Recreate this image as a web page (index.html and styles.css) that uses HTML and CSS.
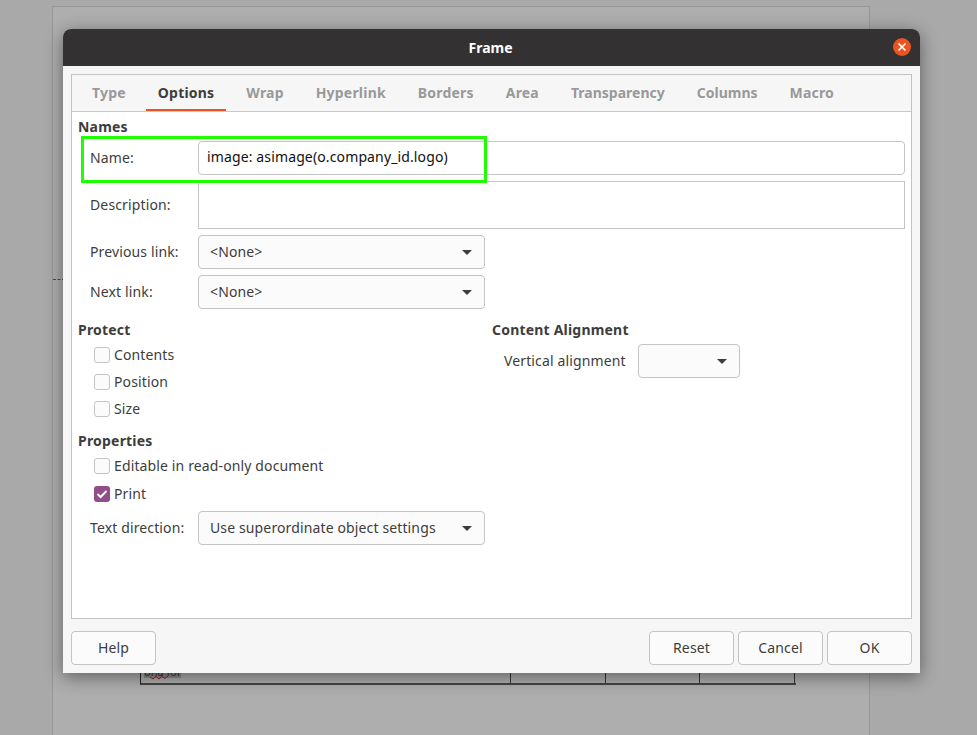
FILE: index.html
```html
<!DOCTYPE html>
<html lang="en">
<head>
  <meta charset="UTF-8">
  <title>Frame</title>
  <link rel="stylesheet" href="styles.css">
</head>
<body>
  <div class="page">
    <div class="margin-mark"></div>
    <div class="doc-table">
      <div class="doc-cell cell-main">
        <div class="doc-text">ona for
          <svg class="squiggle" width="18" height="5" viewBox="0 0 18 5"><path d="M0 2L3 4L6 1.5L9 4L12 1.5L15 3.5L18 1" stroke="#a01c1c" stroke-width="1" fill="none"/></svg>
        </div>
      </div>
      <div class="doc-cell cell-a"></div>
      <div class="doc-cell cell-b"></div>
      <div class="doc-cell cell-c"></div>
    </div>
  </div>

  <div class="dialog">
    <div class="titlebar">
      <span class="title">Frame</span>
      <span class="close-btn">
        <svg width="10" height="10" viewBox="0 0 10 10"><path d="M1.5 1.5L8.5 8.5M8.5 1.5L1.5 8.5" stroke="#fff" stroke-width="1.7" fill="none"/></svg>
      </span>
    </div>
    <div class="dialog-body">
      <div class="notebook">
        <div class="tabs">
          <span class="tab">Type</span>
          <span class="tab active">Options</span>
          <span class="tab">Wrap</span>
          <span class="tab">Hyperlink</span>
          <span class="tab">Borders</span>
          <span class="tab">Area</span>
          <span class="tab tab-tight">Transparency</span>
          <span class="tab tab-tight">Columns</span>
          <span class="tab">Macro</span>
        </div>
        <div class="panel">
          <h2 class="heading">Names</h2>
          <div class="names">
            <label class="label">Name:</label>
            <div class="entry">image: asimage(o.company_id.logo)</div>
            <label class="label">Description:</label>
            <div class="entry textarea"></div>
            <label class="label">Previous link:</label>
            <div class="combo combo-wide"><span>&lt;None&gt;</span><i class="arrow"></i></div>
            <label class="label">Next link:</label>
            <div class="combo combo-wide"><span>&lt;None&gt;</span><i class="arrow"></i></div>
          </div>

          <div class="columns">
            <div class="col-left">
              <h2 class="heading">Protect</h2>
              <div class="checks">
                <div class="check"><i class="box"></i><span>Contents</span></div>
                <div class="check"><i class="box"></i><span>Position</span></div>
                <div class="check"><i class="box"></i><span>Size</span></div>
              </div>
              <h2 class="heading heading-props">Properties</h2>
              <div class="checks checks-props">
                <div class="check"><i class="box"></i><span>Editable in read-only document</span></div>
                <div class="check">
                  <i class="box checked">
                    <svg width="16" height="16" viewBox="0 0 16 16"><path d="M3.5 8L6.6 11L12.5 5" stroke="#fff" stroke-width="2" fill="none"/></svg>
                  </i><span>Print</span>
                </div>
              </div>
              <div class="direction">
                <label class="label">Text direction:</label>
                <div class="combo combo-wide"><span>Use superordinate object settings</span><i class="arrow"></i></div>
              </div>
            </div>
            <div class="col-right">
              <h2 class="heading">Content Alignment</h2>
              <div class="valign">
                <label class="label">Vertical alignment</label>
                <div class="combo combo-small"><span></span><i class="arrow"></i></div>
              </div>
            </div>
          </div>
        </div>
      </div>
      <div class="buttons">
        <button class="btn">Help</button>
        <div class="btn-group">
          <button class="btn">Reset</button>
          <button class="btn">Cancel</button>
          <button class="btn">OK</button>
        </div>
      </div>
    </div>
    <div class="highlight"></div>
  </div>
</body>
</html>
```

FILE: styles.css
```css
* {
  box-sizing: border-box;
}
body {
  margin: 0;
  width: 977px;
  height: 735px;
  overflow: hidden;
  position: relative;
  background: #a9a9a9;
  font-family: "Noto Sans", "Open Sans", sans-serif;
  font-size: 14px;
  letter-spacing: 0.13px;
  color: #3d3d3d;
}

/* document behind the dialog */
.page {
  position: absolute;
  left: 52px;
  top: 6px;
  width: 818px;
  height: 740px;
  background: #aeaeae;
  border: 1px solid #979797;
}
.margin-mark {
  position: absolute;
  left: 0;
  top: 272px;
  width: 12px;
  border-top: 1px dashed #3f4f55;
}
.doc-table {
  position: absolute;
  left: 87px;
  top: 650px;
  width: 656px;
  height: 28px;
  display: flex;
  border-left: 1px solid #222;
  border-bottom: 2px solid #444;
}
.doc-cell {
  border-right: 1px solid #333;
  height: 100%;
}
.cell-main {
  width: 370px;
  padding: 8px 0 0 3px;
}
.cell-a {
  width: 95px;
}
.cell-b {
  width: 94px;
}
.cell-c {
  width: 95px;
}
.doc-text {
  position: relative;
  width: 37px;
  height: 13px;
  background: #8b8b8b;
  font-size: 11px;
  line-height: 13px;
  letter-spacing: 0;
  white-space: nowrap;
  color: #333;
}
.squiggle {
  position: absolute;
  left: 6px;
  top: 10px;
}

/* dialog window */
.dialog {
  position: absolute;
  left: 63px;
  top: 29px;
  width: 857px;
  height: 644px;
  border-radius: 8px 8px 0 0;
  box-shadow: 0 4px 18px rgba(0,0,0,0.45);
  background: #f6f6f6;
}
.titlebar {
  height: 37px;
  background: #333132;
  border-radius: 8px 8px 0 0;
  display: flex;
  justify-content: center;
  align-items: center;
  color: #fff;
  font-weight: bold;
}
.title {
  font-size: 14px;
  padding-right: 2px;
  letter-spacing: 0;
}
.close-btn {
  position: absolute;
  left: 830px;
  top: 9px;
  width: 18px;
  height: 18px;
  border-radius: 50%;
  background: #e95420;
  display: flex;
  justify-content: center;
  align-items: center;
}
.dialog-body {
  padding: 8px;
}
.notebook {
  height: 545px;
  border: 1px solid #c2c2c2;
  background: #fff;
}
.tabs {
  height: 37px;
  padding-left: 8px;
  display: flex;
  gap: 8px;
  background: #f6f6f6;
  border-bottom: 1px solid #c9c9c9;
}
.tab {
  padding: 0 12px;
  height: 36px;
  line-height: 35px;
  font-weight: bold;
  letter-spacing: 0.2px;
  color: #999;
}
.tab-tight {
  letter-spacing: 0;
}
.tab.active {
  color: #3d3d3d;
  border-bottom: 2px solid #e95420;
}
.panel {
  padding: 6px 6px 0 6px;
}
.heading {
  margin: 0;
  height: 18px;
  line-height: 18px;
  font-size: 14px;
  font-weight: bold;
  letter-spacing: 0.2px;
  color: #3d3d3d;
}

/* names block */
.names {
  margin-top: 5px;
  padding-left: 12px;
  display: grid;
  grid-template-columns: 108px 1fr;
  row-gap: 6px;
  align-items: center;
}
.label {
  padding-bottom: 2px;
  color: #3d3d3d;
}
.entry {
  height: 34px;
  line-height: 30px;
  padding: 0 8px;
  background: #fff;
  border: 1px solid #c4c4c4;
  border-radius: 4px;
  color: #111;
}
.entry.textarea {
  height: 48px;
  border-radius: 0;
}
.combo {
  height: 34px;
  display: flex;
  justify-content: space-between;
  align-items: center;
  padding: 0 12px 0 11px;
  background: #fbfbfb;
  border: 1px solid #c4c4c4;
  border-radius: 4px;
}
.combo span {
  margin-bottom: 2px;
}
.combo-wide {
  width: 287px;
}
.combo-small {
  width: 102px;
}
.arrow {
  width: 0;
  height: 0;
  border-left: 5px solid transparent;
  border-right: 5px solid transparent;
  border-top: 5px solid #3d3d3d;
}

/* lower columns */
.columns {
  margin-top: 12px;
  display: flex;
}
.col-left {
  width: 414px;
}
.checks {
  margin-top: 2px;
  padding-left: 16px;
}
.check {
  height: 27px;
  padding-top: 1px;
  display: flex;
  align-items: center;
  gap: 4px;
}
.check span {
  margin-bottom: 2px;
}
.checks-props .check {
  height: 28px;
  padding-top: 0;
}
.box {
  width: 16px;
  height: 16px;
  background: #fbfbfb;
  border: 1px solid #c4c4c4;
  border-radius: 3px;
}
.box.checked {
  background: #924d8b;
  border: 0;
}
.box svg {
  display: block;
}
.heading-props {
  margin-top: 10px;
}
.direction {
  margin-top: 3px;
  padding-left: 12px;
  display: grid;
  grid-template-columns: 108px 287px;
  align-items: center;
}
.valign {
  margin-top: 5px;
  padding-left: 12px;
  display: grid;
  grid-template-columns: 134px 102px;
  align-items: center;
}

/* button row */
.buttons {
  margin-top: 12px;
  display: flex;
  justify-content: space-between;
}
.btn-group {
  display: flex;
  gap: 4px;
}
.btn {
  width: 85px;
  height: 34px;
  font-family: inherit;
  font-size: 14px;
  letter-spacing: inherit;
  color: #3d3d3d;
  background: #fbfbfb;
  border: 1px solid #c4c4c4;
  border-radius: 4px;
  padding: 0 0 2px;
}

/* green annotation drawn on the screenshot */
.highlight {
  position: absolute;
  left: 18px;
  top: 107px;
  width: 406px;
  height: 47px;
  border: 3px solid #1eff00;
}
```
